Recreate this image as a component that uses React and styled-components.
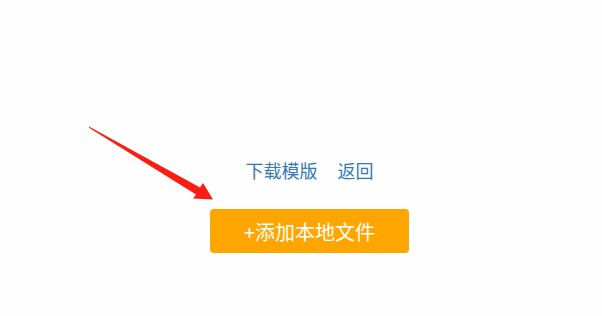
import styled, { createGlobalStyle } from "styled-components";

const GlobalStyle = createGlobalStyle`
  html, body {
    margin: 0;
    padding: 0;
    background: #fefefe;
    font-family: "Noto Sans CJK SC", "Noto Sans", sans-serif;
  }
`;

const Page = styled.div`
  position: relative;
  width: 602px;
  height: 316px;
  box-sizing: border-box;
  padding: 157px 0 0 17px;
  display: flex;
  flex-direction: column;
  align-items: center;
`;

const Links = styled.div`
  display: flex;
  gap: 20px;
  height: 26px;
  line-height: 26px;
`;

const TextLink = styled.a`
  color: #337ab7;
  font-size: 18px;
  text-decoration: none;
  cursor: pointer;
`;

const AddButton = styled.button`
  margin-top: 26px;
  width: 199px;
  height: 44px;
  border: 0;
  border-radius: 4px;
  background: #ffa500;
  color: #fff;
  font-family: inherit;
  font-size: 20px;
  cursor: pointer;
`;

// red arrow pointing at the button, drawn over the page
const Arrow = styled.svg`
  position: absolute;
  left: 0;
  top: 0;
  pointer-events: none;
`;

export default function App() {
  return (
    <>
      <GlobalStyle />
      <Page>
        <Links>
          <TextLink>下载模版</TextLink>
          <TextLink>返回</TextLink>
        </Links>
        <AddButton>+添加本地文件</AddButton>
        <Arrow width="602" height="316" viewBox="0 0 602 316">
          <polygon
            points="89,126.5 200,187.5 203,183 213,199.5 193,198.5 196,194.5 89,127.8"
            fill="#fb1c12"
          />
        </Arrow>
      </Page>
    </>
  );
}
